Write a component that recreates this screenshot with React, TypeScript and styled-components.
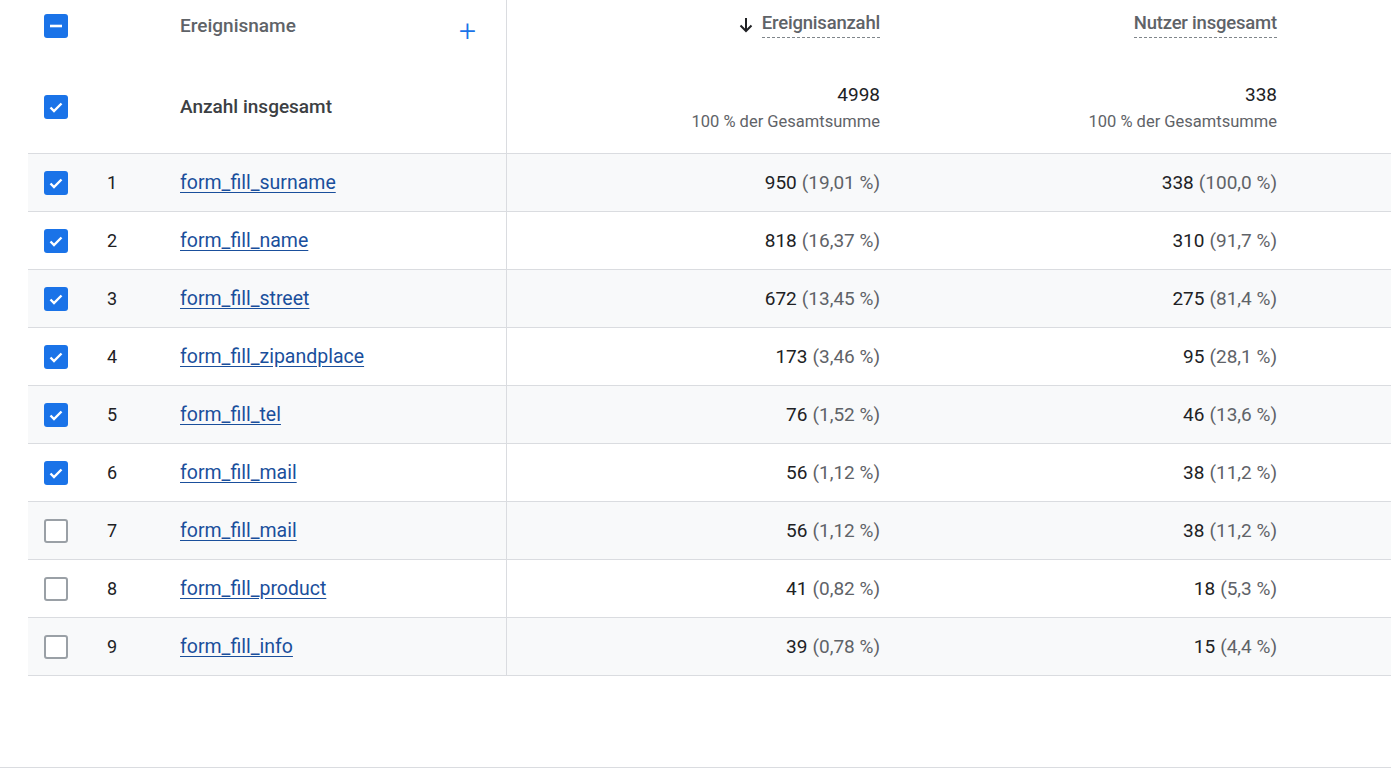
import React from "react";
import styled, { createGlobalStyle } from "styled-components";

const Global = createGlobalStyle`
  body { margin: 0; background: #fff; font-family: Roboto, "Noto Sans", sans-serif; }
`;

const Page = styled.div`
  width: 1391px;
  height: 768px;
  padding-left: 28px;
  box-sizing: border-box;
  border-bottom: 1px solid #dadce0;
  position: relative;
  overflow: hidden;
`;

const cols = "56px 96px 327px 393px 397px 94px";

const Row = styled.div<{ $h: number; $shade?: boolean; $line?: boolean }>`
  display: grid;
  grid-template-columns: ${cols};
  height: ${(p) => p.$h}px;
  background: ${(p) => (p.$shade ? "#f8f9fa" : "#fff")};
  border-bottom: ${(p) => (p.$line ? "1.5px solid #dadce0" : "none")};
  box-sizing: border-box;
`;

const Cell = styled.div<{ $align?: string; $divider?: boolean }>`
  display: flex;
  align-items: center;
  justify-content: ${(p) => p.$align || "flex-start"};
  border-right: ${(p) => (p.$divider ? "1.5px solid #dadce0" : "none")};
  font-size: 19px;
  color: #202124;
  box-sizing: border-box;
`;

const MetricCell = styled(Cell)`
  justify-content: flex-end;
  padding-right: 20px;
`;

const TopCell = styled(Cell)`
  align-items: flex-start;
  padding-top: 14px;
`;

const HeadName = styled.span`
  color: #5f6368;
  font-weight: 500;
  font-size: 19px;
`;

const Plus = styled.span`
  margin-left: auto;
  margin-right: 30px;
  color: #1a73e8;
  font-size: 30px;
  font-weight: 300;
  line-height: 1;
  margin-top: 2px;
`;

const MetricHead = styled.span`
  display: flex;
  align-items: center;
  gap: 6px;
  font-size: 18.5px;
  font-weight: 500;
  color: #5f6368;
  font-family: "Roboto", sans-serif;
  letter-spacing: -0.2px;
`;

const Dashed = styled.span`
  border-bottom: 1.5px dashed #80868b;
  padding-bottom: 3px;
`;

const TotalBlock = styled.div`
  display: flex;
  flex-direction: column;
  align-items: flex-end;
  gap: 6px;
`;

const TotalNum = styled.span`
  font-size: 19px;
  color: #202124;
`;

const TotalSub = styled.span`
  font-size: 16.5px;
  color: #5f6368;
`;

const Link = styled.a`
  color: #1a4f9c;
  text-decoration: underline;
  text-underline-offset: 3px;
  font-size: 19.5px;
  cursor: pointer;
`;

const Pct = styled.span`
  color: #5f6368;
  margin-left: 5px;
`;

const Idx = styled.span`
  padding-left: 23px;
  font-size: 18px;
`;

const Box = styled.div<{ $on: boolean }>`
  width: 24px;
  height: 24px;
  border-radius: 3px;
  box-sizing: border-box;
  margin-left: 16px;
  background: ${(p) => (p.$on ? "#1a73e8" : "#fff")};
  border: ${(p) => (p.$on ? "none" : "2px solid #9aa0a6")};
  display: flex;
  align-items: center;
  justify-content: center;
`;

function Check({ state }: { state: "on" | "off" | "mixed" }) {
  return (
    <Box $on={state !== "off"}>
      {state === "on" && (
        <svg width="18" height="18" viewBox="0 0 18 18">
          <path d="M3.5 9.5l3.5 3.5 7.5-7.5" fill="none" stroke="#fff" strokeWidth="2.4" />
        </svg>
      )}
      {state === "mixed" && (
        <svg width="18" height="18" viewBox="0 0 18 18">
          <path d="M3 9h12" stroke="#fff" strokeWidth="2.6" />
        </svg>
      )}
    </Box>
  );
}

const rows = [
  ["form_fill_surname", "950", "19,01 %", "338", "100,0 %", true],
  ["form_fill_name", "818", "16,37 %", "310", "91,7 %", true],
  ["form_fill_street", "672", "13,45 %", "275", "81,4 %", true],
  ["form_fill_zipandplace", "173", "3,46 %", "95", "28,1 %", true],
  ["form_fill_tel", "76", "1,52 %", "46", "13,6 %", true],
  ["form_fill_mail", "56", "1,12 %", "38", "11,2 %", true],
  ["form_fill_mail", "56", "1,12 %", "38", "11,2 %", false],
  ["form_fill_product", "41", "0,82 %", "18", "5,3 %", false],
  ["form_fill_info", "39", "0,78 %", "15", "4,4 %", false],
] as const;

export default function App() {
  return (
    <Page>
      <Global />
      <Row $h={60}>
        <TopCell><Check state="mixed" /></TopCell>
        <TopCell />
        <TopCell $divider style={{ paddingTop: 14 }}>
          <HeadName>Ereignisname</HeadName>
          <Plus>+</Plus>
        </TopCell>
        <MetricCell style={{ alignItems: "flex-start", paddingTop: 12 }}>
          <MetricHead>
            <svg width="20" height="20" viewBox="0 0 20 20">
              <path d="M10 3v13M4.5 10.5L10 16l5.5-5.5" fill="none" stroke="#202124" strokeWidth="2" />
            </svg>
            <Dashed>Ereignisanzahl</Dashed>
          </MetricHead>
        </MetricCell>
        <MetricCell style={{ alignItems: "flex-start", paddingTop: 12 }}>
          <MetricHead><Dashed>Nutzer insgesamt</Dashed></MetricHead>
        </MetricCell>
        <Cell />
      </Row>
      <Row $h={94} $line>
        <Cell><Check state="on" /></Cell>
        <Cell />
        <Cell $divider><HeadName style={{ fontWeight: 500, color: "#3c4043" }}>Anzahl insgesamt</HeadName></Cell>
        <MetricCell>
          <TotalBlock>
            <TotalNum>4998</TotalNum>
            <TotalSub>100 % der Gesamtsumme</TotalSub>
          </TotalBlock>
        </MetricCell>
        <MetricCell>
          <TotalBlock>
            <TotalNum>338</TotalNum>
            <TotalSub>100 % der Gesamtsumme</TotalSub>
          </TotalBlock>
        </MetricCell>
        <Cell />
      </Row>
      {rows.map((r, i) => (
        <Row key={i} $h={58} $shade={i % 2 === 0} $line>
          <Cell><Check state={r[5] ? "on" : "off"} /></Cell>
          <Cell><Idx>{i + 1}</Idx></Cell>
          <Cell $divider><Link>{r[0]}</Link></Cell>
          <MetricCell>{r[1]}<Pct>({r[2]})</Pct></MetricCell>
          <MetricCell>{r[3]}<Pct>({r[4]})</Pct></MetricCell>
          <Cell />
        </Row>
      ))}
    </Page>
  );
}
